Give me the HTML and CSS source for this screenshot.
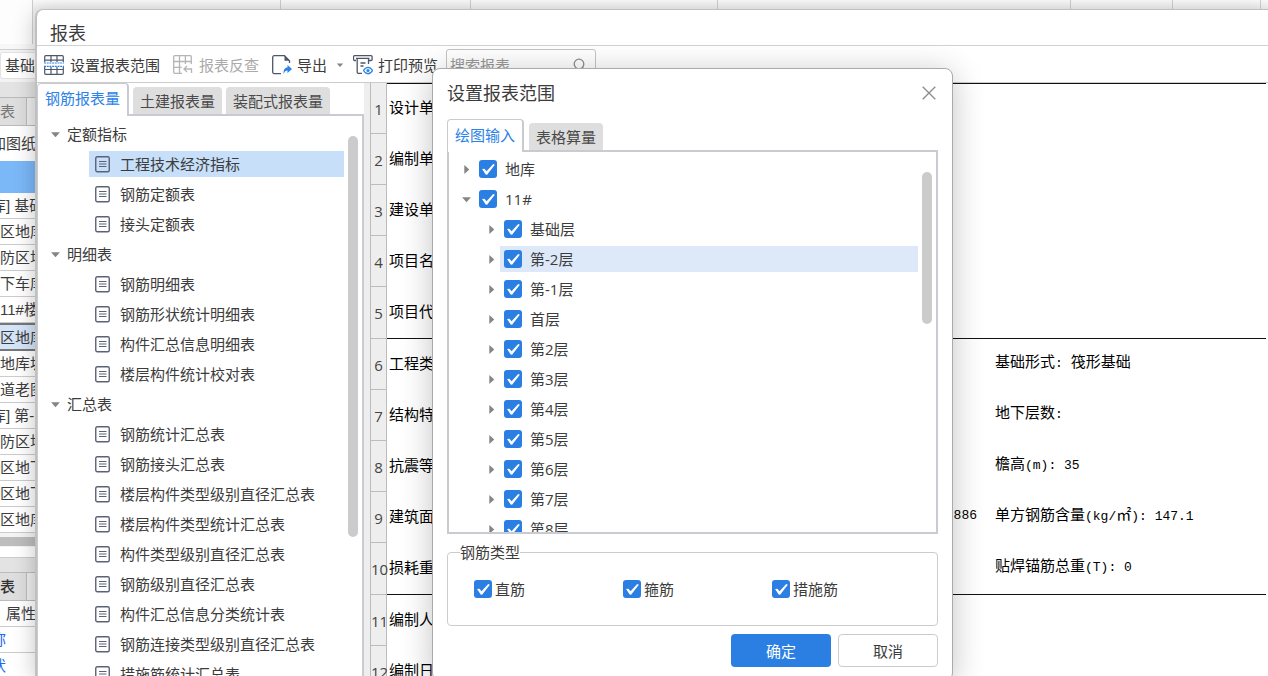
FILE: index.html
```html
<!DOCTYPE html>
<html lang="zh-CN">
<head>
<meta charset="utf-8">
<title>报表</title>
<link rel="stylesheet" href="styles.css">
</head>
<body>
<svg class="defs" aria-hidden="true">
  <symbol id="doc" viewBox="0 0 15 17"><rect x=".75" y=".75" width="13.5" height="15" rx="1.5" fill="none" stroke="currentColor" stroke-width="1.4"/><path d="M4 5.500h7.500M4 8h7.500M4 10.500h7.500" stroke="currentColor" stroke-width="1.2"/></symbol>
  <symbol id="open" viewBox="0 0 10 10"><path d="M1 3h8L5 7.500z" fill="#858585"/></symbol>
  <symbol id="shut" viewBox="0 0 10 10"><path d="M3 1v8l4.500-4z" fill="#858585"/></symbol>
</svg>

<div class="app">
  <div class="ribbon"><i></i><i></i><i></i><i></i><i></i><i></i><i></i></div>
  <div class="side">
    <div class="side-tools"><button>基础层</button></div>
    <div class="side-head"></div>
    <div class="side-tabs"><span>表</span></div>
    <div class="side-add"><span class="cut">加图纸</span></div>
    <div class="side-blue"></div>
    <ul class="side-list">
      <li><span class="cut">库] 基础</span></li>
      <li>区地库</li>
      <li>防区地库</li>
      <li>下车库</li>
      <li>11#楼</li>
      <li class="picked">区地库</li>
      <li>地库坡</li>
      <li>道老图</li>
      <li><span class="cut">库] 第-1</span></li>
      <li>防区地</li>
      <li>区地下</li>
      <li>区地下</li>
      <li>区地库</li>
    </ul>
    <div class="side-scroll"></div>
    <div class="side-head gap"></div>
    <div class="side-tabs strong"><span>表</span></div>
    <ul class="side-list">
      <li class="prop">属性</li>
      <li class="blue"><span class="cut">称</span></li>
      <li class="blue"><span class="cut">状</span></li>
    </ul>
  </div>
</div>

<main class="window">
  <h1 class="window-title">报表</h1>
  <div class="toolbar">
    <button class="tool t1">
      <svg width="20" height="20" viewBox="0 0 20 20" fill="none" stroke="#4f566b" stroke-width="1.2"><path d="M.7 7V1.700a1 1 0 0 1 1-1h16.600a1 1 0 0 1 1 1V7M7 .7V7M13 .7V7M.7 5.200h18.600M.7 12v6.300a1 1 0 0 0 1 1h16.600a1 1 0 0 0 1-1V12M7 12v7.300M13 12v7.300M.7 14.500h18.600"/><path d="M0 8h20M0 11.300h20" stroke="#2b82e8" stroke-dasharray="2 .7"/></svg>设置报表范围</button>
    <button class="tool t2" disabled>
      <svg width="20" height="20" viewBox="0 0 20 20" fill="none" stroke="#b5b5b5" stroke-width="1.3"><path d="M9 18.300H1.700a1 1 0 0 1-1-1V1.700a1 1 0 0 1 1-1h15.600a1 1 0 0 1 1 1V9M6.500.7v17.600M12.400.7V9M.7 6.500h17.600M.7 12.400h8M18.500 18v-4H11M14 11l-3 3 3 3"/></svg>报表反查</button>
    <button class="tool t3">
      <svg width="20" height="20" viewBox="0 0 20 20" fill="none"><path d="M9 18.600H2.200A1.500 1.500 0 0 1 .7 17V2.200A1.500 1.500 0 0 1 2.200.7H12.500l5 5V8" stroke="#4f566b" stroke-width="1.3"/><path d="M12.500.7v5h5z" fill="#4f566b"/><path d="M11.500 19c0-4 1-6.500 4-6.500V10l4.500 4-4.500 4v-2.500c-2 0-3 1-4 3.500z" fill="#2b82e8"/></svg>导出</button>
    <svg class="caret" width="8" height="8"><use href="#open"/></svg>
    <button class="tool t4">
      <svg width="20" height="20" viewBox="0 0 20 20" fill="none"><path d="M3 5.500H1.500a1 1 0 0 1-1-1V1.700a1 1 0 0 1 1-1h16.600a1 1 0 0 1 1 1v2.800a1 1 0 0 1-1 1H16M3 3.300h13.500M4.200 3.300v14a1 1 0 0 0 1 1H9M15.500 3.300V9M7.500 8h5M7.500 11h3" stroke="#4f566b" stroke-width="1.3"/><path d="M10.500 15.500c2.600-4.300 6.400-4.300 9 0-2.600 4.300-6.400 4.300-9 0z" stroke="#2b82e8" stroke-width="1.300"/><circle cx="15" cy="15.500" r="1.600" fill="#2b82e8"/></svg>打印预览</button>
    <div class="search"><input type="text" placeholder="搜索报表" aria-label="搜索报表"><svg width="14" height="14" viewBox="0 0 14 14" fill="none" stroke="#8e8e8e" stroke-width="1.300"><circle cx="6" cy="6" r="4.800"/><path d="M9.500 9.500l4 4"/></svg></div>
  </div>
  <div class="content">
    <section class="reports">
      <nav class="tabs">
        <button class="tab on">钢筋报表量</button><button class="tab">土建报表量</button><button class="tab">装配式报表量</button>
      </nav>
      <div class="tree">
        <ul>
          <li class="group"><svg><use href="#open"/></svg>定额指标</li>
          <li class="picked"><svg><use href="#doc"/></svg>工程技术经济指标</li>
          <li><svg><use href="#doc"/></svg>钢筋定额表</li>
          <li><svg><use href="#doc"/></svg>接头定额表</li>
          <li class="group"><svg><use href="#open"/></svg>明细表</li>
          <li><svg><use href="#doc"/></svg>钢筋明细表</li>
          <li><svg><use href="#doc"/></svg>钢筋形状统计明细表</li>
          <li><svg><use href="#doc"/></svg>构件汇总信息明细表</li>
          <li><svg><use href="#doc"/></svg>楼层构件统计校对表</li>
          <li class="group"><svg><use href="#open"/></svg>汇总表</li>
          <li><svg><use href="#doc"/></svg>钢筋统计汇总表</li>
          <li><svg><use href="#doc"/></svg>钢筋接头汇总表</li>
          <li><svg><use href="#doc"/></svg>楼层构件类型级别直径汇总表</li>
          <li><svg><use href="#doc"/></svg>楼层构件类型统计汇总表</li>
          <li><svg><use href="#doc"/></svg>构件类型级别直径汇总表</li>
          <li><svg><use href="#doc"/></svg>钢筋级别直径汇总表</li>
          <li><svg><use href="#doc"/></svg>构件汇总信息分类统计表</li>
          <li><svg><use href="#doc"/></svg>钢筋连接类型级别直径汇总表</li>
          <li><svg><use href="#doc"/></svg>措施筋统计汇总表</li>
        </ul>
        <div class="thumb"></div>
      </div>
    </section>
    <section class="sheet">
      <table>
        <colgroup><col class="c-num"><col><col class="c-right"></colgroup>
        <tbody>
        <tr><th>1</th><td>设计单位</td><td></td></tr>
        <tr><th>2</th><td>编制单位</td><td></td></tr>
        <tr><th>3</th><td>建设单位</td><td></td></tr>
        <tr><th>4</th><td>项目名称</td><td></td></tr>
        <tr class="rule"><th>5</th><td>项目代号</td><td></td></tr>
        <tr><th>6</th><td>工程类别</td><td>基础形式<span class="m">: </span>筏形基础</td></tr>
        <tr><th>7</th><td>结构特征</td><td>地下层数<span class="m">:</span></td></tr>
        <tr><th>8</th><td>抗震等级</td><td>檐高<span class="m">(m): 35</span></td></tr>
        <tr><th>9</th><td><div class="pair">建筑面积<span class="m">886</span></div></td><td>单方钢筋含量<span class="m">(kg/</span>㎡<span class="m">): 147.1</span></td></tr>
        <tr class="rule"><th>10</th><td>损耗重量</td><td>贴焊锚筋总重<span class="m">(T): 0</span></td></tr>
        <tr><th>11</th><td>编制人</td><td></td></tr>
        <tr><th>12</th><td>编制日期</td><td></td></tr>
        </tbody>
      </table>
    </section>
  </div>
</main>

<div class="dialog" role="dialog" aria-labelledby="dialog-title">
  <header><h2 id="dialog-title">设置报表范围</h2><button class="close" aria-label="关闭"><svg width="14" height="14" viewBox="0 0 14 14" stroke="#8a8a8a" stroke-width="1.300"><path d="M.7.7l12.600 12.600M13.300.7L.7 13.300"/></svg></button></header>
  <nav class="tabs"><button class="tab on">绘图输入</button><button class="tab">表格算量</button></nav>
  <div class="scope">
    <ul>
      <li class="top"><svg><use href="#shut"/></svg><label><input type="checkbox" checked>地库</label></li>
      <li class="top"><svg><use href="#open"/></svg><label><input type="checkbox" checked>11#</label></li>
      <li><svg><use href="#shut"/></svg><label><input type="checkbox" checked>基础层</label></li>
      <li class="picked"><svg><use href="#shut"/></svg><label><input type="checkbox" checked>第-2层</label></li>
      <li><svg><use href="#shut"/></svg><label><input type="checkbox" checked>第-1层</label></li>
      <li><svg><use href="#shut"/></svg><label><input type="checkbox" checked>首层</label></li>
      <li><svg><use href="#shut"/></svg><label><input type="checkbox" checked>第2层</label></li>
      <li><svg><use href="#shut"/></svg><label><input type="checkbox" checked>第3层</label></li>
      <li><svg><use href="#shut"/></svg><label><input type="checkbox" checked>第4层</label></li>
      <li><svg><use href="#shut"/></svg><label><input type="checkbox" checked>第5层</label></li>
      <li><svg><use href="#shut"/></svg><label><input type="checkbox" checked>第6层</label></li>
      <li><svg><use href="#shut"/></svg><label><input type="checkbox" checked>第7层</label></li>
      <li><svg><use href="#shut"/></svg><label><input type="checkbox" checked>第8层</label></li>
    </ul>
    <div class="thumb"></div>
  </div>
  <fieldset>
    <legend>钢筋类型</legend>
    <div class="kinds">
      <label><input type="checkbox" checked>直筋</label>
      <label><input type="checkbox" checked>箍筋</label>
      <label><input type="checkbox" checked>措施筋</label>
    </div>
  </fieldset>
  <footer><button class="ok">确定</button><button class="cancel">取消</button></footer>
</div>
</body>
</html>
```
FILE: styles.css
```css
* { box-sizing: border-box; }
body {
  margin: 0;
  height: 100vh;
  overflow: hidden;
  position: relative;
  background: #fff;
  color: #3c3c3c;
  font: 15px/20px "Open Sans", "Noto Sans CJK SC", sans-serif;
}
button, input { font: inherit; color: inherit; }
button { border: 0; background: none; padding: 0; }
ul { list-style: none; margin: 0; padding: 0; }
h1, h2 { margin: 0; font-size: 18px; font-weight: 400; line-height: 24px; }
.defs { position: absolute; width: 0; height: 0; }

/* application behind the report window */
.app { height: 100%; }
.ribbon {
  height: 50px;
  display: grid;
  grid-template-columns: 33px 248px 190px 247px 353px 102px 88px;
  padding-bottom: 5px;
  border-bottom: 1px solid #d0d0d0;
  background: linear-gradient(#fbfbfb, #efefef 9px, #f8f8f8);
}
.ribbon i { border-right: 1px solid #cfcfcf; }
.ribbon i:first-child { background: #fdfdfd; }
.side { width: 120px; white-space: nowrap; font-family: "Liberation Sans", "Noto Sans CJK SC", sans-serif; }
.side-tools { height: 32px; background: #f3f3f3; padding-top: 2px; }
.side-tools button { width: 100%; height: 27px; border: 1px solid #e2e2e2; border-radius: 3px; background: #fff; padding-left: 4px; text-align: left; }
.side-head { height: 16px; background: #e3e3e3; border-bottom: 1px solid #bbb; }
.side-head.gap { margin-top: 10px; border-top: 1px solid #ccc; }
.side-tabs { height: 28px; background: #eee; border-bottom: 1px solid #bbb; display: flex; color: #777; }
.side-tabs span { width: 27px; padding: 4px 0; background: #dedede; border-right: 1px solid #bbb; }
.side-tabs.strong { color: #333; font-weight: 500; }
.side-add { height: 35px; padding-top: 8px; }
.cut { margin-left: -9px; }
.side-blue { height: 32px; background: #7bb8f8; }
.side-list li { height: 26px; padding-top: 3px; border-bottom: 1px solid #ccc; }
.side-list .picked { height: 28px; background: #d5e5f9; border: solid #777; border-width: 2px 0; }
.side-list .prop { padding-left: 6px; }
.side-list .blue { color: #2368f0; }
.side-scroll { height: 14px; background: #bdbdbd; border: solid #f4f4f4; border-width: 4px 0 1px; }

/* report window */
.window {
  position: absolute;
  inset: 9px 0 0 35px;
  display: flex;
  flex-direction: column;
  background: #fff;
  border: solid #c0c0c0;
  border-width: 1px 0 0 2px;
  border-radius: 8px 0 0 0;
  box-shadow: 0 4px 22px rgba(0, 0, 0, .24);
}
.window-title { height: 36px; padding: 12px 0 0 13px; border-bottom: 1px solid #d2d2d2; line-height: 23px; }
.toolbar { height: 37px; display: flex; align-items: center; padding: 2px 0 0 7px; border-bottom: 1px solid #ccc; }
.tool { display: flex; align-items: center; gap: 6px; white-space: nowrap; }
.t1 { margin-right: 13px; }
.t2 { margin-right: 13px; color: #aaa; }
.t3 { margin-right: 9px; }
.t3, .t4 { gap: 5px; }
.t4 { margin: 0 8px 0 9px; }
.caret { flex: none; }
.search { width: 150px; height: 32px; display: flex; align-items: center; padding: 0 8px 0 3px; border: 1px solid #c4c4c4; border-radius: 3px; }
.search input { flex: 1; min-width: 0; border: 0; padding: 0; background: none; outline: 0; }
.search input::placeholder { color: #999; opacity: 1; }
.content { flex: 1; min-height: 0; display: flex; }
.reports { width: 327px; display: flex; flex-direction: column; }

.tabs { display: flex; align-items: flex-end; gap: 5px; }
.tab { height: 27px; padding: 0 7px; background: #dedede; border-radius: 4px 4px 0 0; color: #4a4a4a; white-space: nowrap; }
.tab.on { height: 32px; margin-bottom: -2px; background: #fff; border: solid #c9cbd0; border-width: 1px 2px 0 1px; color: #2b82e8; position: relative; z-index: 1; }
.reports .tabs { height: 31px; gap: 4px; }
.reports .tab.on { height: 33px; padding-bottom: 4px; }

.tree { flex: 1; min-height: 0; overflow: hidden; position: relative; border: solid #c9cbd0; border-width: 2px 2px 0 1px; padding: 3px 18px 0 51px; }
.tree li { height: 26px; margin: 4px 0; display: flex; align-items: center; gap: 10px; padding-left: 6px; white-space: nowrap; color: #3c3c3c; }
.tree ul { margin-top: -2px; }
.tree li svg { width: 15px; height: 17px; flex: none; color: #5b6278; }
.tree .group { margin-left: -39px; padding-left: 0; gap: 6px; }
.tree .group svg { width: 11px; height: 11px; }
.tree .picked { background: #c7dff9; }
.thumb { position: absolute; width: 10px; border-radius: 5px; background: #cbcbcb; }
.tree .thumb { right: 4px; top: 20px; height: 401px; }

.sheet { flex: 1; min-width: 0; overflow: hidden; background: #eee; padding-left: 6px; }
.sheet table { width: 100%; table-layout: fixed; border-collapse: separate; border-spacing: 0; border-right: 2px solid #fff; background: #fff; }
.c-num { width: 17px; }
.c-right { width: 276px; }
.sheet th { height: 51px; padding: 1px 0 0; border: solid #bcbcbc; border-width: 0 1px 1px; background: #eee; font-weight: 400; color: #444; }
.sheet td { height: 51px; padding: 0 0 4px 2px; color: #000; white-space: nowrap; overflow: hidden; font-family: "Noto Sans CJK SC", sans-serif; }
.sheet td:last-child { padding-left: 5px; }
.sheet tr:first-child td { border-top: 1px solid #111; }
.sheet .rule th, .sheet .rule td { height: 52px; }
.sheet .rule td { border-bottom: 1px solid #111; }
.pair { display: flex; justify-content: space-between; padding-right: 13px; }
.m { font: 13px/20px "Liberation Mono", monospace; white-space: pre; }

/* scope dialog */
.dialog {
  position: absolute;
  left: 432px;
  top: 68px;
  bottom: -5px;
  width: 521px;
  display: flex;
  flex-direction: column;
  padding: 0 14px;
  background: #fff;
  border: 1px solid #aaa;
  border-radius: 8px;
  box-shadow: 0 5px 32px rgba(0, 0, 0, .24);
}
.dialog header { display: flex; align-items: center; justify-content: space-between; height: 48px; }
.close { width: 18px; height: 18px; display: grid; place-items: center; }
.dialog .tabs { height: 33px; }
.dialog .tab.on { height: 33px; padding-bottom: 2px; }
.scope { flex: 1; min-height: 0; position: relative; overflow: hidden; border: 2px solid #c9cbd0; padding: 0 18px 0 51px; }
.scope li { height: 26px; margin: 4px 0; display: flex; align-items: center; }
.scope li svg { width: 11px; height: 11px; margin-left: -14px; margin-right: 7px; flex: none; }
.scope .top { margin-left: -25px; }
.scope .picked { background: #dde8f9; }
.scope .thumb { right: 4px; top: 20px; height: 152px; }
label { display: flex; align-items: center; gap: 8px; }
input[type="checkbox"] { appearance: none; width: 18px; height: 18px; margin: 0; border-radius: 3px; background: #2b7fe3; flex: none; }
input[type="checkbox"]:checked::before {
  content: "";
  display: block;
  height: 100%;
  background: #fff;
  clip-path: polygon(17% 50%, 30% 49%, 42% 62%, 79% 22%, 88% 26%, 45% 82%, 37% 80%);
}
fieldset { margin: 8px 0 8px; padding: 0; border: 1px solid #ccc; border-radius: 4px; min-width: 0; }
legend { margin-left: 12px; padding: 0; }
.kinds { display: grid; grid-template-columns: repeat(3, 149px); padding: 17px 0 26px 26px; }
.kinds label { gap: 3px; }
.dialog footer { display: flex; justify-content: flex-end; gap: 7px; padding-bottom: 13px; }
.dialog footer button { width: 100px; height: 33px; border-radius: 4px; }
.ok { background: #2b7fe3; color: #fff; }
.dialog footer .cancel { border: 1px solid #ccc; background: #fff; }
```
